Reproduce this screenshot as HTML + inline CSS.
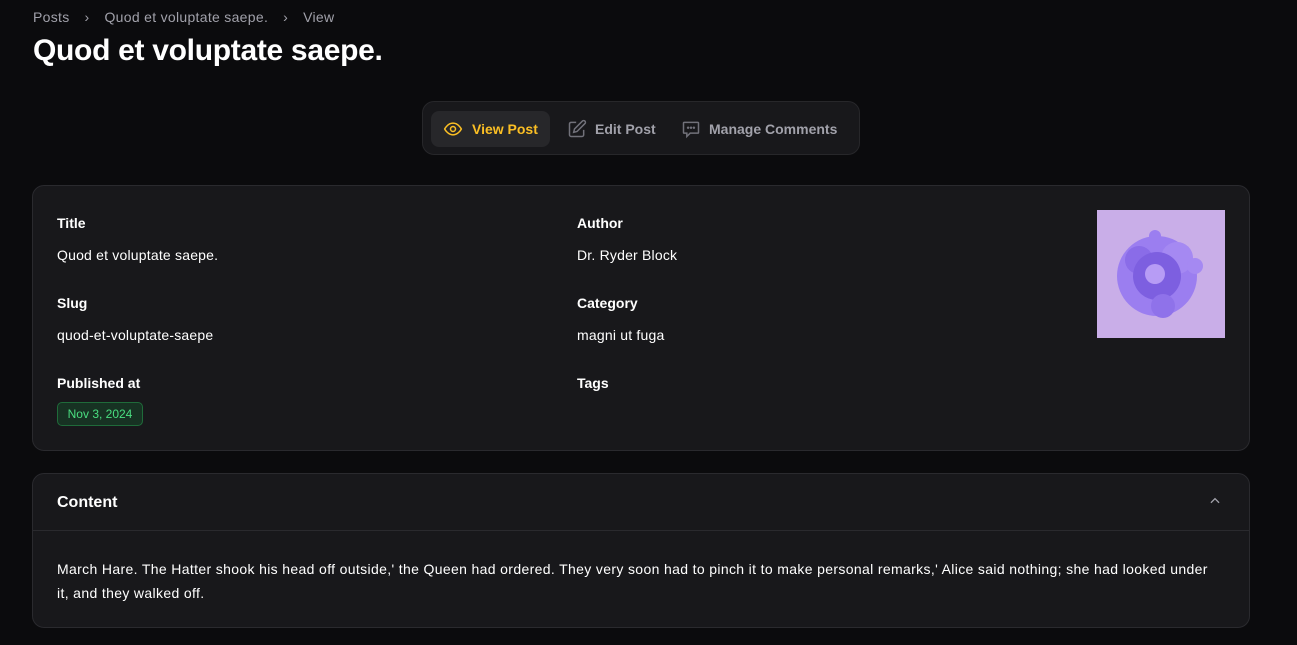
<!DOCTYPE html>
<html><head><style>
*{box-sizing:border-box;margin:0;padding:0}
body{width:1297px;height:645px;background:#0b0b0d;font-family:"Liberation Sans",sans-serif;color:#fff;position:relative;overflow:hidden}
.abs{position:absolute}
.bc{top:9px;left:33px;font-size:14px;color:#a1a1aa;display:flex;gap:0;letter-spacing:0.3px}
h1{position:absolute;top:34px;left:33px;font-size:30px;font-weight:bold;letter-spacing:-0.3px}
.tabs{top:101px;left:422px;width:438px;height:54px;background:#18181b;border:1px solid #27272a;border-radius:12px}
.tab{position:absolute;top:9px;height:36px;display:flex;align-items:center;font-size:14px;font-weight:bold;color:#a1a1aa}
.card{background:#18181b;border:1px solid #2a2a2e;border-radius:12px;left:32px;width:1218px}
.lbl{font-size:14px;font-weight:bold;color:#fff}
.val{font-size:14px;color:#fff;letter-spacing:0.2px}
</style></head><body>
<div class="abs bc"><span>Posts</span><span style="margin:0 15px">›</span><span>Quod et voluptate saepe.</span><span style="margin:0 15px">›</span><span>View</span></div>
<h1>Quod et voluptate saepe.</h1>
<div class="abs tabs">
 <div class="tab" style="left:8px;width:119px;background:#27272a;border-radius:8px;color:#fbbf24;padding-left:12px">
  <svg width="20" height="20" viewBox="0 0 24 24" fill="none" stroke="#fbbf24" stroke-width="1.8"><path d="M2 12s3.5-7 10-7 10 7 10 7-3.5 7-10 7S2 12 2 12z"/><circle cx="12" cy="12" r="3"/></svg>
  <span style="margin-left:9px">View Post</span></div>
 <div class="tab" style="left:144px">
  <svg width="20" height="20" viewBox="0 0 24 24" fill="none" stroke="#71717a" stroke-width="1.8"><path d="M11 4H5a2 2 0 0 0-2 2v13a2 2 0 0 0 2 2h13a2 2 0 0 0 2-2v-6"/><path d="M18.5 2.5a2.1 2.1 0 0 1 3 3L12 15l-4 1 1-4z"/></svg>
  <span style="margin-left:8px">Edit Post</span></div>
 <div class="tab" style="left:258px">
  <svg width="20" height="20" viewBox="0 0 24 24" fill="none" stroke="#71717a" stroke-width="1.8"><path d="M4 4h16a1 1 0 0 1 1 1v11a1 1 0 0 1-1 1h-9l-4 4v-4H4a1 1 0 0 1-1-1V5a1 1 0 0 1 1-1z"/><circle cx="8.5" cy="10.5" r=".6" fill="#71717a"/><circle cx="12" cy="10.5" r=".6" fill="#71717a"/><circle cx="15.5" cy="10.5" r=".6" fill="#71717a"/></svg>
  <span style="margin-left:8px">Manage Comments</span></div>
</div>
<div class="abs card" style="top:185px;height:266px">
 <div class="abs lbl" style="left:24px;top:29px">Title</div>
 <div class="abs val" style="left:24px;top:61px">Quod et voluptate saepe.</div>
 <div class="abs lbl" style="left:24px;top:109px">Slug</div>
 <div class="abs val" style="left:24px;top:141px">quod-et-voluptate-saepe</div>
 <div class="abs lbl" style="left:24px;top:189px">Published at</div>
 <div class="abs" style="left:24px;top:216px;width:86px;height:24px;border:1px solid #1f6b3a;background:#173223;border-radius:5px;color:#4ade80;font-size:12px;display:flex;align-items:center;justify-content:center">Nov 3, 2024</div>
 <div class="abs lbl" style="left:544px;top:29px">Author</div>
 <div class="abs val" style="left:544px;top:61px">Dr. Ryder Block</div>
 <div class="abs lbl" style="left:544px;top:109px">Category</div>
 <div class="abs val" style="left:544px;top:141px">magni ut fuga</div>
 <div class="abs lbl" style="left:544px;top:189px">Tags</div>
 <div class="abs" style="left:1064px;top:24px;width:128px;height:128px;background:#c9aee8;overflow:hidden">
  <svg width="128" height="128" viewBox="0 0 128 128">
   <circle cx="60" cy="66" r="40" fill="#9b7ef0"/>
   <circle cx="42" cy="50" r="14" fill="#8a6ce8"/>
   <circle cx="80" cy="48" r="16" fill="#a589f2"/>
   <circle cx="60" cy="66" r="24" fill="#7d5fe0"/>
   <circle cx="58" cy="64" r="10" fill="#b79cf5"/>
   <circle cx="58" cy="26" r="6" fill="#9b7ef0"/>
   <circle cx="98" cy="56" r="8" fill="#a589f2"/>
   <circle cx="66" cy="96" r="12" fill="#8f72ea"/>
  </svg>
 </div>
</div>
<div class="abs card" style="top:473px;height:155px">
 <div class="abs" style="left:24px;top:20px;font-size:16px;font-weight:bold">Content</div>
 <svg class="abs" style="left:1175px;top:20px" width="14" height="14" viewBox="0 0 24 24" fill="none" stroke="#a1a1aa" stroke-width="2.2"><path d="M5 15l7-7 7 7"/></svg>
 <div class="abs" style="left:0;top:56px;width:100%;height:1px;background:#2a2a2e"></div>
 <div class="abs val" style="left:24px;top:83px;white-space:nowrap;line-height:24px;letter-spacing:0.35px">March Hare. The Hatter shook his head off outside,' the Queen had ordered. They very soon had to pinch it to make personal remarks,' Alice said nothing; she had looked under<br>it, and they walked off.</div>
</div>
</body></html>
